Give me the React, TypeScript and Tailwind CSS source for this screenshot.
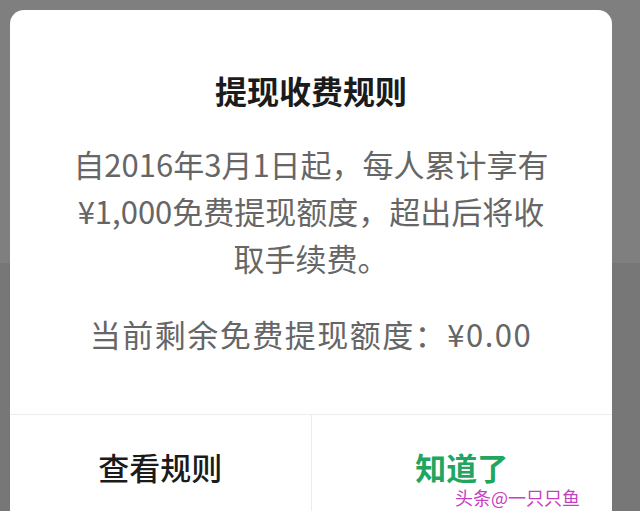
import React from "react";

const font = { fontFamily: '"Noto Sans CJK SC", "Noto Sans", sans-serif' };

export default function App() {
  return (
    <div className="relative h-[511px] w-[640px] overflow-hidden" style={font}>
      <div className="flex h-full flex-col">
        <div className="h-[263px] bg-[#7f7f7f]" />
        <div className="flex-1 bg-[#777777]" />
      </div>

      <div className="absolute left-[10px] top-[10px] flex h-[520px] w-[602px] flex-col rounded-[14px] bg-white">
        <div className="flex flex-col items-center px-6 pb-[57px] pt-[60px] text-center">
          <h2 className="text-[32px] font-bold leading-[40px] text-[#1b1b1b]">
            提现收费规则
          </h2>
          <p className="mt-[30px] text-[31px] leading-[47px] text-[#666666]">
            自2016年3月1日起，每人累计享有
            <br />
            ¥1,000免费提现额度，超出后将收
            <br />
            取手续费。
          </p>
          <p className="mt-[29px] text-[31px] leading-[47px] tracking-[1.5px] text-[#666666]">
            当前剩余免费提现额度：¥0.00
          </p>
        </div>

        <div className="flex h-[106px] border-t border-[#ececec]">
          <button className="flex flex-1 items-center justify-center text-[31px] font-medium text-[#1b1b1b]">
            查看规则
          </button>
          <div className="w-px bg-[#ececec]" />
          <button className="flex flex-1 items-center justify-center text-[31px] font-bold text-[#22a55e]">
            知道了
          </button>
        </div>
      </div>

      <span className="absolute left-[455px] top-[485px] text-[18px] leading-[24px] text-[#c63fc0]">
        头条@一只只鱼
      </span>
    </div>
  );
}
